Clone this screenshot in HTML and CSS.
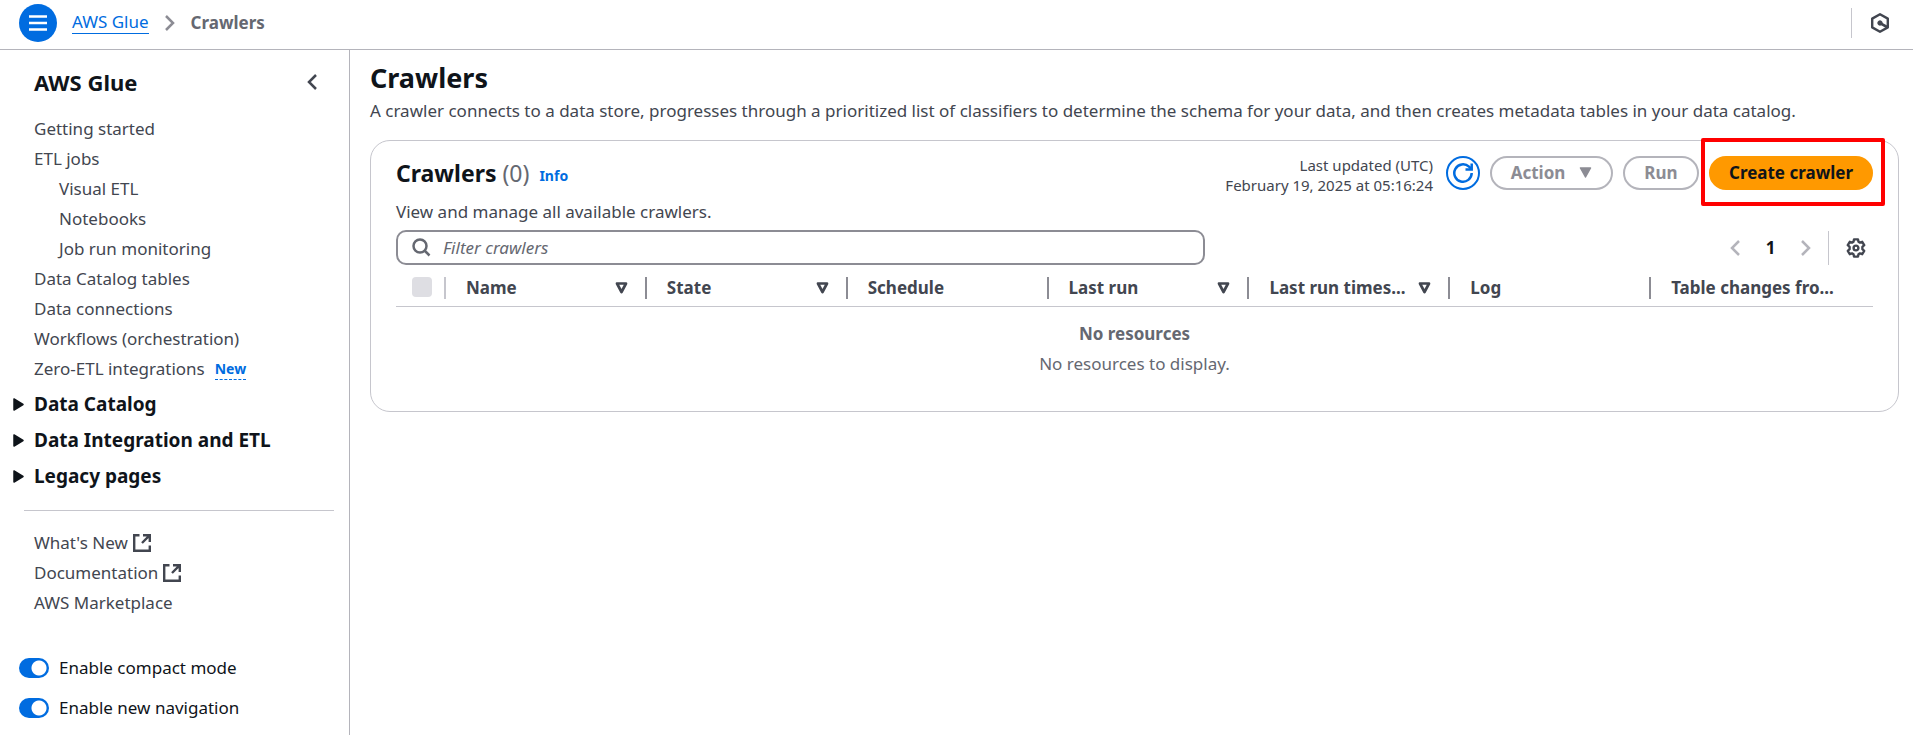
FILE: index.html
```html
<!DOCTYPE html>
<html lang="en">
<head>
<meta charset="utf-8">
<title>Crawlers - AWS Glue</title>
<link rel="stylesheet" href="styles.css">
</head>
<body>
<header class="topbar">
  <button class="menu-button" type="button" aria-label="Open navigation">
    <svg width="18" height="16" viewBox="0 0 18 16" fill="none" stroke="#fff" stroke-width="2.400"><path d="M0 1.500h18M0 8h18M0 14.500h18"/></svg>
  </button>
  <nav class="breadcrumbs" aria-label="Breadcrumbs">
    <a href="#">AWS Glue</a>
    <svg class="crumb-chevron" width="10" height="16" viewBox="0 0 10 16" fill="none" stroke="#8c8c94" stroke-width="2.500"><path d="M1 1l7 7-7 7"/></svg>
    <span class="crumb-current">Crawlers</span>
  </nav>
  <div class="topbar-tools">
    <button class="icon-button" type="button" aria-label="Amazon Q">
      <svg width="20" height="22" viewBox="0 0 20 22" fill="none" stroke="#424650" stroke-width="2.400" stroke-linejoin="round"><path d="M10 2.200l7.800 4.400v8.800L10 19.800l-7.800-4.400V6.600z"/><path d="M10.500 11.300l6.500 3.700" stroke-width="2.600"/><circle cx="10" cy="11" r="2.200" fill="#424650" stroke-width="1"/></svg>
    </button>
  </div>
</header>
<div class="layout">
  <aside class="sidebar">
    <div class="sidebar-head">
      <h2>AWS Glue</h2>
      <button class="icon-button" type="button" aria-label="Close navigation">
        <svg width="10" height="16" viewBox="0 0 10 16" fill="none" stroke="#424650" stroke-width="2.500"><path d="M9 1L2 8l7 7"/></svg>
      </button>
    </div>
    <nav aria-label="AWS Glue">
      <ul class="nav-list">
        <li><a href="#">Getting started</a></li>
        <li><a href="#">ETL jobs</a>
          <ul class="nav-sub">
            <li><a href="#">Visual ETL</a></li>
            <li><a href="#">Notebooks</a></li>
            <li><a href="#">Job run monitoring</a></li>
          </ul>
        </li>
        <li><a href="#">Data Catalog tables</a></li>
        <li><a href="#">Data connections</a></li>
        <li><a href="#">Workflows (orchestration)</a></li>
        <li class="nav-tagged"><a href="#">Zero-ETL integrations</a><button class="new-tag" type="button">New</button></li>
      </ul>
      <div class="nav-sections">
        <button type="button" aria-expanded="false"><svg width="11" height="13" viewBox="0 0 11 13"><path d="M1 1v11l9-5.500z" fill="#0f141a" stroke="#0f141a" stroke-width="1.500" stroke-linejoin="round"/></svg>Data Catalog</button>
        <button type="button" aria-expanded="false"><svg width="11" height="13" viewBox="0 0 11 13"><path d="M1 1v11l9-5.500z" fill="#0f141a" stroke="#0f141a" stroke-width="1.500" stroke-linejoin="round"/></svg>Data Integration and ETL</button>
        <button type="button" aria-expanded="false"><svg width="11" height="13" viewBox="0 0 11 13"><path d="M1 1v11l9-5.500z" fill="#0f141a" stroke="#0f141a" stroke-width="1.500" stroke-linejoin="round"/></svg>Legacy pages</button>
      </div>
      <hr class="nav-divider">
      <ul class="nav-list">
        <li><a class="external" href="#">What's New <svg width="18" height="18" viewBox="0 0 18 18" fill="none" stroke="#424650" stroke-width="2.400"><path d="M6.500 1.200H1.200v15.600h15.600v-5.300M10 1.200h6.800V8M16.800 1.200L9 9"/></svg></a></li>
        <li><a class="external" href="#">Documentation <svg width="18" height="18" viewBox="0 0 18 18" fill="none" stroke="#424650" stroke-width="2.400"><path d="M6.500 1.200H1.200v15.600h15.600v-5.300M10 1.200h6.800V8M16.800 1.200L9 9"/></svg></a></li>
        <li><a href="#">AWS Marketplace</a></li>
      </ul>
    </nav>
    <div class="toggles">
      <label class="toggle"><input type="checkbox" role="switch" checked>Enable compact mode</label>
      <label class="toggle"><input type="checkbox" role="switch" checked>Enable new navigation</label>
    </div>
  </aside>
  <main class="content">
    <h1>Crawlers</h1>
    <p class="lead">A crawler connects to a data store, progresses through a prioritized list of classifiers to determine the schema for your data, and then creates metadata tables in your data catalog.</p>
    <section class="card">
      <div class="card-head">
        <h2>Crawlers <span class="count">(0)</span></h2>
        <a class="info" href="#">Info</a>
        <div class="actions">
          <p class="updated">Last updated (UTC)<br>February 19, 2025 at 05:16:24</p>
          <button class="refresh" type="button" aria-label="Refresh">
            <svg width="22" height="22" viewBox="0 0 22 22" fill="none" stroke="#006ce0" stroke-width="2.500"><path d="M19.700 11A8.700 8.700 0 1 1 17 4.700L19.500 7"/><path d="M19.700 1.500v6h-6.200"/></svg>
          </button>
          <button class="pill action" type="button" disabled>Action<svg width="13" height="11" viewBox="0 0 13 11"><path d="M1.500 1h10l-5 9z" fill="#8c8c94" stroke="#8c8c94" stroke-width="1.500" stroke-linejoin="round"/></svg></button>
          <button class="pill run" type="button" disabled>Run</button>
          <div class="highlighted"><button class="pill primary" type="button">Create crawler</button></div>
        </div>
      </div>
      <p class="card-desc">View and manage all available crawlers.</p>
      <div class="tools">
        <div class="search">
          <svg width="19" height="19" viewBox="0 0 19 19" fill="none" stroke="#656871" stroke-width="2.500"><circle cx="8" cy="8" r="6.500"/><path d="M12.500 12.500l5 5"/></svg>
          <input type="text" aria-label="Filter crawlers" placeholder="Filter crawlers">
        </div>
        <div class="pager">
          <button class="icon-button" type="button" aria-label="Previous page"><svg width="10" height="16" viewBox="0 0 10 16" fill="none" stroke="#b4b4bb" stroke-width="2.500"><path d="M9 1L2 8l7 7"/></svg></button>
          <button class="page" type="button">1</button>
          <button class="icon-button" type="button" aria-label="Next page"><svg width="10" height="16" viewBox="0 0 10 16" fill="none" stroke="#b4b4bb" stroke-width="2.500"><path d="M1 1l7 7-7 7"/></svg></button>
        </div>
        <div class="settings">
          <button class="icon-button" type="button" aria-label="Preferences"><svg width="20" height="20" viewBox="0 0 20 20" fill="none" stroke="#424650" stroke-width="2.400" stroke-linejoin="round"><path d="M8 1.400h4l.5 2.400 1.400.8 2.300-.8 2 3.400-1.800 1.600v2.400l1.800 1.600-2 3.400-2.300-.8-1.400.8-.5 2.400H8l-.5-2.400-1.400-.8-2.300.8-2-3.400 1.800-1.600V8.800L1.800 7.200l2-3.400 2.300.8 1.400-.8z"/><circle cx="10" cy="10" r="2.400"/></svg></button>
        </div>
      </div>
      <table class="grid">
        <colgroup><col class="col-check"><col class="col"><col class="col"><col class="col"><col class="col"><col class="col"><col class="col"><col></colgroup>
        <thead>
          <tr>
            <th class="check"><div class="cell"><input type="checkbox" aria-label="Select all" disabled></div></th>
            <th><div class="cell"><span>Name</span><svg width="13" height="12" viewBox="0 0 13 12"><path d="M2 1.500h9L6.500 10z" fill="none" stroke="#424650" stroke-width="2.700" stroke-linejoin="round"/></svg></div></th>
            <th><div class="cell"><span>State</span><svg width="13" height="12" viewBox="0 0 13 12"><path d="M2 1.500h9L6.500 10z" fill="none" stroke="#424650" stroke-width="2.700" stroke-linejoin="round"/></svg></div></th>
            <th><div class="cell"><span>Schedule</span></div></th>
            <th><div class="cell"><span>Last run</span><svg width="13" height="12" viewBox="0 0 13 12"><path d="M2 1.500h9L6.500 10z" fill="none" stroke="#424650" stroke-width="2.700" stroke-linejoin="round"/></svg></div></th>
            <th><div class="cell"><span>Last run times...</span><svg width="13" height="12" viewBox="0 0 13 12"><path d="M2 1.500h9L6.500 10z" fill="none" stroke="#424650" stroke-width="2.700" stroke-linejoin="round"/></svg></div></th>
            <th><div class="cell"><span>Log</span></div></th>
            <th><div class="cell"><span>Table changes fro...</span></div></th>
          </tr>
        </thead>
        <tbody>
          <tr><td class="empty" colspan="8"><strong>No resources</strong><br>No resources to display.</td></tr>
        </tbody>
      </table>
    </section>
  </main>
</div>
</body>
</html>
```
FILE: styles.css
```css
* { box-sizing: border-box; }
body {
  margin: 0;
  min-height: 100vh;
  display: flex;
  flex-direction: column;
  background: #fff;
  color: #424650;
  font: 17px/30px "Noto Sans", sans-serif;
}
h1, h2, p, ul { margin: 0; padding: 0; }
ul { list-style: none; }
a { color: inherit; text-decoration: none; }
button { font: inherit; color: inherit; background: none; border: 0; padding: 0; cursor: pointer; }
svg { flex: none; display: block; }

.topbar {
  display: flex;
  align-items: center;
  height: 50px;
  padding: 0 12px 4px 19px;
  border-bottom: 1px solid #b4b4bb;
}
.menu-button {
  display: grid;
  place-items: center;
  width: 38px;
  height: 38px;
  border-radius: 50%;
  background: #006ce0;
}
.breadcrumbs { display: flex; align-items: center; margin-left: 15px; gap: 16px; }
.breadcrumbs a { color: #006ce0; border-bottom: 1px solid #006ce0; line-height: 22px; }
.crumb-current { color: #656871; font-weight: 700; }
.topbar-tools {
  display: flex;
  align-items: center;
  height: 30px;
  margin-left: auto;
  padding: 0 11px 0 18px;
  border-left: 1px solid #c6c6cd;
}
.icon-button { display: grid; place-items: center; }

.layout { display: flex; flex: 1; }
.sidebar { flex: none; width: 350px; border-right: 1px solid #b4b4bb; }
.sidebar-head {
  display: flex;
  align-items: center;
  justify-content: space-between;
  padding: 17px 32px 17px 34px;
}
.sidebar-head h2 { font-size: 22px; color: #0f141a; }
.nav-list { padding-left: 34px; }
.nav-sub { padding-left: 25px; }
.nav-tagged { display: flex; align-items: center; gap: 10px; }
.new-tag { color: #006ce0; font-size: 14px; font-weight: 700; line-height: 20px; border-bottom: 1px dashed #006ce0; }
.nav-sections { padding: 2px 0 0 13px; }
.nav-sections button {
  display: flex;
  align-items: center;
  gap: 10px;
  width: 100%;
  height: 36px;
  color: #0f141a;
  font-size: 19px;
  font-weight: 700;
}
.nav-divider { margin: 16px 15px 17px 24px; border: 0; border-top: 1px solid #c6c6cd; }
.external { display: flex; align-items: center; gap: 5px; }
.toggles { display: grid; gap: 10px; padding: 35px 19px 10px; color: #0f141a; }
.toggle { display: flex; align-items: center; gap: 10px; }
.toggle input {
  appearance: none;
  width: 30px;
  height: 20px;
  margin: 0;
  border-radius: 10px;
  background: radial-gradient(circle at 20px 10px, #fff 7px, #006ce0 8px);
}

.content { flex: 1; min-width: 0; padding: 11px 14px 20px 20px; }
h1 { font-size: 27px; line-height: 34px; color: #0f141a; }
.lead { padding: 1px 0 14px; }
.card { border: 1px solid #c6c6cd; border-radius: 20px; padding: 10px 25px 32px; }
.card-head { display: flex; align-items: center; min-height: 44px; }
.card-head h2 { font-size: 23px; color: #0f141a; }
.count { font-weight: 400; color: #656871; }
.info { margin: 6px 0 0 10px; color: #006ce0; font-size: 14px; font-weight: 700; line-height: 20px; }
.actions { display: flex; align-items: center; gap: 10px; margin-left: auto; }
.updated { margin-right: 3px; padding-top: 4px; font-size: 15px; line-height: 20px; text-align: right; }
.refresh {
  display: grid;
  place-items: center;
  width: 34px;
  height: 34px;
  border: 2px solid #006ce0;
  border-radius: 50%;
}
.pill {
  display: flex;
  align-items: center;
  justify-content: center;
  height: 34px;
  padding-bottom: 1px;
  border: 2px solid #b4b4bb;
  border-radius: 17px;
  color: #8c8c94;
  font-weight: 700;
}
.action { width: 123px; gap: 14px; }
.run { width: 76px; }
.primary { width: 164px; border-color: #ff9900; background: #ff9900; color: #0f141a; }
.highlighted { position: relative; }
.highlighted::after {
  content: "";
  position: absolute;
  inset: -18px -12px -16px -8px;
  border: 4px solid #f00;
  border-radius: 2px;
  pointer-events: none;
}
.card-desc { padding: 2px 0 3px; }
.tools { display: flex; align-items: center; }
.search {
  display: flex;
  align-items: center;
  gap: 12px;
  width: 54.8%;
  height: 35px;
  padding: 0 14px;
  border: 2px solid #8c8c94;
  border-radius: 10px;
}
.search input { flex: 1; min-width: 0; border: 0; outline: 0; padding: 0; background: none; font: inherit; }
.search input::placeholder { color: #656871; font-style: italic; opacity: 1; }
.pager { display: flex; align-items: center; margin-left: auto; }
.page { width: 61px; color: #0f141a; font-weight: 700; }
.settings { display: flex; align-items: center; height: 34px; margin-left: 17px; padding: 0 7px 0 17px; border-left: 1px solid #c6c6cd; }
.grid { width: 100%; table-layout: fixed; border-collapse: collapse; }
.col-check { width: 50px; }
.col { width: 13.6%; }
.grid th { height: 41px; padding: 6px 0 0; border-bottom: 1px solid #c6c6cd; text-align: left; }
.cell {
  display: flex;
  align-items: center;
  justify-content: space-between;
  height: 22px;
  padding: 0 17px 0 20px;
  border-right: 2px solid #8c8c94;
  white-space: nowrap;
}
th:last-child .cell { border-right: 0; }
.check .cell { padding: 0 12px 2px 16px; border-color: #c6c6cd; }
.check input { appearance: none; width: 20px; height: 20px; margin: 0; border-radius: 4px; background: #dedee3; }
.empty { padding: 12px 0 0; text-align: center; color: #656871; }
```
